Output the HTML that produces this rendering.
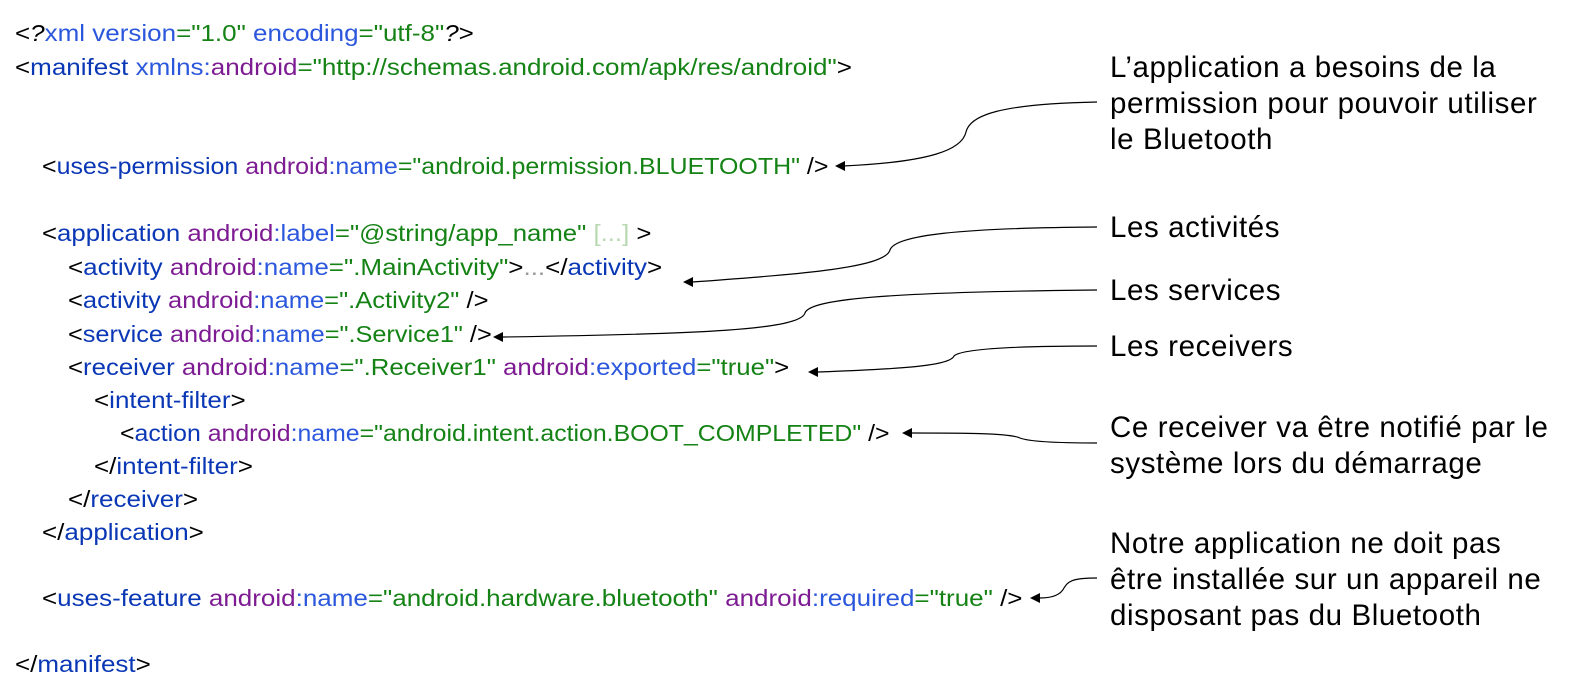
<!DOCTYPE html>
<html><head><meta charset="utf-8"><style>
html,body{margin:0;padding:0;background:#fff;width:1571px;height:696px;overflow:hidden;position:relative}
.l{position:absolute;font-family:"Liberation Sans",sans-serif;font-size:23px;line-height:28px;white-space:pre;color:#000;transform:scaleX(1.13);transform-origin:0 0}
.t{color:#0a37b5}.a{color:#2b57dc}.p{color:#7d1b93}.g{color:#148214}.q{color:#b7d8b0}.e{color:#999}
.r{position:absolute;left:1110px;font-family:"Liberation Sans",Arial,sans-serif;font-size:29.5px;letter-spacing:0.6px;line-height:36px;color:#000;white-space:pre}
svg{position:absolute;left:0;top:0}
</style></head><body>
<div class="l" style="left:15px;top:19px">&lt;<i>?</i><span class="a">xml version</span><span class="g">="1.0"</span> <span class="a">encoding</span><span class="g">="utf-8"</span><i>?</i>&gt;</div>
<div class="l" style="left:15px;top:53px">&lt;<span class="t">manifest</span> <span class="a">xmlns:</span><span class="p">android</span><span class="g">="http://schemas.android.com/apk/res/android"</span>&gt;</div>
<div class="l" style="left:42px;top:152px;transform:scaleX(1.085)">&lt;<span class="t">uses-permission</span> <span class="p">android</span><span class="a">:name</span><span class="g">="android.permission.BLUETOOTH"</span> /&gt;</div>
<div class="l" style="left:42px;top:219px;transform:scaleX(1.12)">&lt;<span class="t">application</span> <span class="p">android</span><span class="a">:label</span><span class="g">="@string/app_name"</span> <span class="q">[...]</span> &gt;</div>
<div class="l" style="left:68px;top:253px">&lt;<span class="t">activity</span> <span class="p">android</span><span class="a">:name</span><span class="g">=".MainActivity"</span>&gt;<span class="e">...</span>&lt;/<span class="t">activity</span>&gt;</div>
<div class="l" style="left:68px;top:286px;transform:scaleX(1.11)">&lt;<span class="t">activity</span> <span class="p">android</span><span class="a">:name</span><span class="g">=".Activity2"</span> /&gt;</div>
<div class="l" style="left:68px;top:320px;transform:scaleX(1.10)">&lt;<span class="t">service</span> <span class="p">android</span><span class="a">:name</span><span class="g">=".Service1"</span> /&gt;</div>
<div class="l" style="left:68px;top:353px;transform:scaleX(1.12)">&lt;<span class="t">receiver</span> <span class="p">android</span><span class="a">:name</span><span class="g">=".Receiver1"</span> <span class="p">android</span><span class="a">:exported</span><span class="g">="true"</span>&gt;</div>
<div class="l" style="left:94px;top:386px">&lt;<span class="t">intent-filter</span>&gt;</div>
<div class="l" style="left:120px;top:419px;transform:scaleX(1.08)">&lt;<span class="t">action</span> <span class="p">android</span><span class="a">:name</span><span class="g">="android.intent.action.BOOT_COMPLETED"</span> /&gt;</div>
<div class="l" style="left:94px;top:452px">&lt;/<span class="t">intent-filter</span>&gt;</div>
<div class="l" style="left:68px;top:485px">&lt;/<span class="t">receiver</span>&gt;</div>
<div class="l" style="left:42px;top:518px">&lt;/<span class="t">application</span>&gt;</div>
<div class="l" style="left:42px;top:584px">&lt;<span class="t">uses-feature</span> <span class="p">android</span><span class="a">:name</span><span class="g">="android.hardware.bluetooth"</span> <span class="p">android</span><span class="a">:required</span><span class="g">="true"</span> /&gt;</div>
<div class="l" style="left:15px;top:650px">&lt;/<span class="t">manifest</span>&gt;</div>

<div class="r" style="top:50px">L’application a besoins de la
permission pour pouvoir utiliser
le Bluetooth</div>
<div class="r" style="top:210px">Les activités</div>
<div class="r" style="top:273px">Les services</div>
<div class="r" style="top:329px">Les receivers</div>
<div class="r" style="top:410px">Ce receiver va être notifié par le
système lors du démarrage</div>
<div class="r" style="top:526px">Notre application ne doit pas
être installée sur un appareil ne
disposant pas du Bluetooth</div>

<svg width="1571" height="696" fill="none" stroke="#000" stroke-width="1.2">
<path d="M1097 102 C1000 104 970 115 966 132 C962 150 930 162 843 166"/>
<path d="M1097 227 C960 228 895 235 890 250 C885 268 800 274 693 282"/>
<path d="M1097 290 C900 292 810 298 805 313 C800 330 700 334 503 337"/>
<path d="M1097 346 C1000 346 960 350 954 356 C950 366 900 369 818 372"/>
<path d="M1097 443 C1040 443 1025 440 1020 438 C1010 433 960 433 912 433"/>
<path d="M1097 578 C1070 578 1068 582 1064 588 C1060 596 1050 598 1040 598"/>
<g fill="#000" stroke="none">
<path d="M835 166 l10 -5 v10z"/>
<path d="M683 282 l10 -5 v10z"/>
<path d="M493 337 l10 -5 v10z"/>
<path d="M808 372 l10 -5 v10z"/>
<path d="M902 433 l10 -5 v10z"/>
<path d="M1030 598 l10 -5 v10z"/>
</g>
</svg>
</body></html>
